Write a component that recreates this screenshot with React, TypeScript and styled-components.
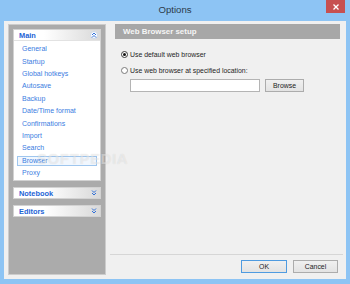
import React from "react";
import styled, { createGlobalStyle } from "styled-components";

const GlobalStyle = createGlobalStyle`
  html, body {
    margin: 0;
    padding: 0;
  }
  body {
    width: 350px;
    height: 284px;
    overflow: hidden;
    font-family: "Liberation Sans", Arial, sans-serif;
  }
  * {
    box-sizing: border-box;
  }
`;

const Window = styled.div`
  position: relative;
  width: 350px;
  height: 284px;
  background: #8dc4f4;
  display: flex;
  flex-direction: column;
`;

const TitleBar = styled.div`
  height: 21px;
  display: grid;
  grid-template-columns: 1fr auto 1fr;
  align-items: start;
`;

const Title = styled.div`
  grid-column: 2;
  font-size: 9.6px;
  line-height: 19px;
  color: #2c3a4a;
`;

const CloseButton = styled.div`
  grid-column: 3;
  justify-self: end;
  width: 19px;
  height: 13px;
  margin-right: 5px;
  background: #c75050;
  display: flex;
  align-items: center;
  justify-content: center;
`;

const Client = styled.div`
  flex: 1;
  margin: 0 4px 5px 4px;
  background: #f0f0f0;
  display: flex;
  padding: 3px 3px 4px 4px;
`;

const Sidebar = styled.div`
  width: 98px;
  background: #ababab;
  border: 1px solid #cccccc;
  padding: 4px;
  display: flex;
  flex-direction: column;
  gap: 6px;
`;

const Card = styled.div`
  background: #ffffff;
  border: 1px solid #d2d2d2;
`;

const CardHeader = styled.div<{ $open?: boolean }>`
  height: 10px;
  display: flex;
  align-items: center;
  justify-content: space-between;
  padding: 0 2px 0 5px;
  background: linear-gradient(to right, #ffffff 35%, #d9d9d9);
  border-bottom: ${(p) => (p.$open ? "1px solid #e2e2e2" : "none")};
  box-sizing: content-box;
`;

const CardTitle = styled.span`
  font-size: 7.4px;
  font-weight: bold;
  color: #1d63d6;
`;

const ChevronBadge = styled.span<{ $ring?: boolean }>`
  width: 8px;
  height: 8px;
  border-radius: 50%;
  display: flex;
  align-items: center;
  justify-content: center;
  background: ${(p) => (p.$ring ? "#ffffff" : "transparent")};
  border: 1px solid ${(p) => (p.$ring ? "#c9d6e8" : "transparent")};
`;

const ItemList = styled.div`
  padding: 2px 3px 1px 3px;
`;

const Item = styled.div`
  height: 12.4px;
  display: flex;
  align-items: center;
`;

const ItemLabel = styled.span<{ $selected?: boolean }>`
  flex: 1;
  height: 10px;
  line-height: 8px;
  padding-left: 4px;
  font-size: 7px;
  color: #3b7ddf;
  border: 1px solid ${(p) => (p.$selected ? "#9fc6ee" : "transparent")};
  background: ${(p) => (p.$selected ? "#f1f7fe" : "transparent")};
`;

const RightColumn = styled.div`
  flex: 1;
  margin-left: 4px;
  display: flex;
  flex-direction: column;
`;

const RightContent = styled.div`
  flex: 1;
  padding: 0 3px 0 5px;
`;

const SectionHeader = styled.div`
  height: 15px;
  line-height: 15px;
  background: #a7a7a7;
  color: #f5f5f5;
  font-size: 7.9px;
  font-weight: bold;
  padding-left: 8px;
`;

const Options = styled.div`
  padding: 7px 0 0 6px;
  display: flex;
  flex-direction: column;
`;

const RadioRow = styled.label`
  height: 16px;
  display: flex;
  align-items: center;
  gap: 2px;
  font-size: 6.9px;
  color: #1e1e1e;
`;

const RadioCircle = styled.span<{ $checked?: boolean }>`
  width: 7px;
  height: 7px;
  border-radius: 50%;
  border: 1px solid ${(p) => (p.$checked ? "#3a3a3a" : "#7a7a7a")};
  background: #ffffff;
  display: flex;
  align-items: center;
  justify-content: center;

  &::after {
    content: "";
    width: 3px;
    height: 3px;
    border-radius: 50%;
    background: ${(p) => (p.$checked ? "#111111" : "transparent")};
  }
`;

const PathRow = styled.div`
  margin: 1px 0 0 9px;
  display: flex;
  gap: 5px;
`;

const PathInput = styled.div`
  width: 130px;
  height: 13px;
  background: #ffffff;
  border: 1px solid #b4b4b4;
`;

const Button = styled.div<{ $width: number; $default?: boolean }>`
  width: ${(p) => p.$width}px;
  height: 13px;
  display: flex;
  align-items: center;
  justify-content: center;
  font-size: 6.9px;
  color: #222222;
  background: linear-gradient(#f0f0f0, #e3e3e3);
  border: 1px solid ${(p) => (p.$default ? "#4f9be0" : "#acacac")};
`;

const Separator = styled.div`
  height: 1px;
  background: #d6d6d6;
`;

const ButtonRow = styled.div`
  height: 20px;
  padding: 5px 5px 0 0;
  display: flex;
  justify-content: flex-end;
  gap: 6px;
`;

const Watermark = styled.div`
  position: absolute;
  left: 37px;
  top: 150px;
  font-size: 15px;
  font-weight: bold;
  letter-spacing: 0.6px;
  color: rgba(255, 255, 255, 0.45);
  text-shadow: 0 0 1px rgba(0, 0, 0, 0.12);
  pointer-events: none;
`;

const Chevrons = ({ up }: { up?: boolean }) => (
  <svg width="6" height="6" viewBox="0 0 6 6">
    <g
      fill="none"
      stroke="#2f6fd8"
      strokeWidth="1"
      transform={up ? undefined : "rotate(180 3 3)"}
    >
      <polyline points="1,3 3,1 5,3" />
      <polyline points="1,5.5 3,3.5 5,5.5" />
    </g>
  </svg>
);

const mainItems = [
  "General",
  "Startup",
  "Global hotkeys",
  "Autosave",
  "Backup",
  "Date/Time format",
  "Confirmations",
  "Import",
  "Search",
  "Browser",
  "Proxy",
];

export default function App() {
  return (
    <Window>
      <GlobalStyle />
      <TitleBar>
        <Title>Options</Title>
        <CloseButton>
          <svg width="6" height="6" viewBox="0 0 6 6">
            <path d="M0.5 0.5 L5.5 5.5 M5.5 0.5 L0.5 5.5" stroke="#ffffff" strokeWidth="1.3" />
          </svg>
        </CloseButton>
      </TitleBar>
      <Client>
        <Sidebar>
          <Card>
            <CardHeader $open>
              <CardTitle>Main</CardTitle>
              <ChevronBadge $ring>
                <Chevrons up />
              </ChevronBadge>
            </CardHeader>
            <ItemList>
              {mainItems.map((item) => (
                <Item key={item}>
                  <ItemLabel $selected={item === "Browser"}>{item}</ItemLabel>
                </Item>
              ))}
            </ItemList>
          </Card>
          <Card>
            <CardHeader>
              <CardTitle>Notebook</CardTitle>
              <ChevronBadge>
                <Chevrons />
              </ChevronBadge>
            </CardHeader>
          </Card>
          <Card>
            <CardHeader>
              <CardTitle>Editors</CardTitle>
              <ChevronBadge>
                <Chevrons />
              </ChevronBadge>
            </CardHeader>
          </Card>
        </Sidebar>
        <RightColumn>
          <RightContent>
            <SectionHeader>Web Browser setup</SectionHeader>
            <Options>
              <RadioRow>
                <RadioCircle $checked />
                Use default web browser
              </RadioRow>
              <RadioRow>
                <RadioCircle />
                Use web browser at specified location:
              </RadioRow>
              <PathRow>
                <PathInput />
                <Button $width={39}>Browse</Button>
              </PathRow>
            </Options>
          </RightContent>
          <Separator />
          <ButtonRow>
            <Button $width={46} $default>
              OK
            </Button>
            <Button $width={45}>Cancel</Button>
          </ButtonRow>
        </RightColumn>
      </Client>
      <Watermark>SOFTPEDIA</Watermark>
    </Window>
  );
}
